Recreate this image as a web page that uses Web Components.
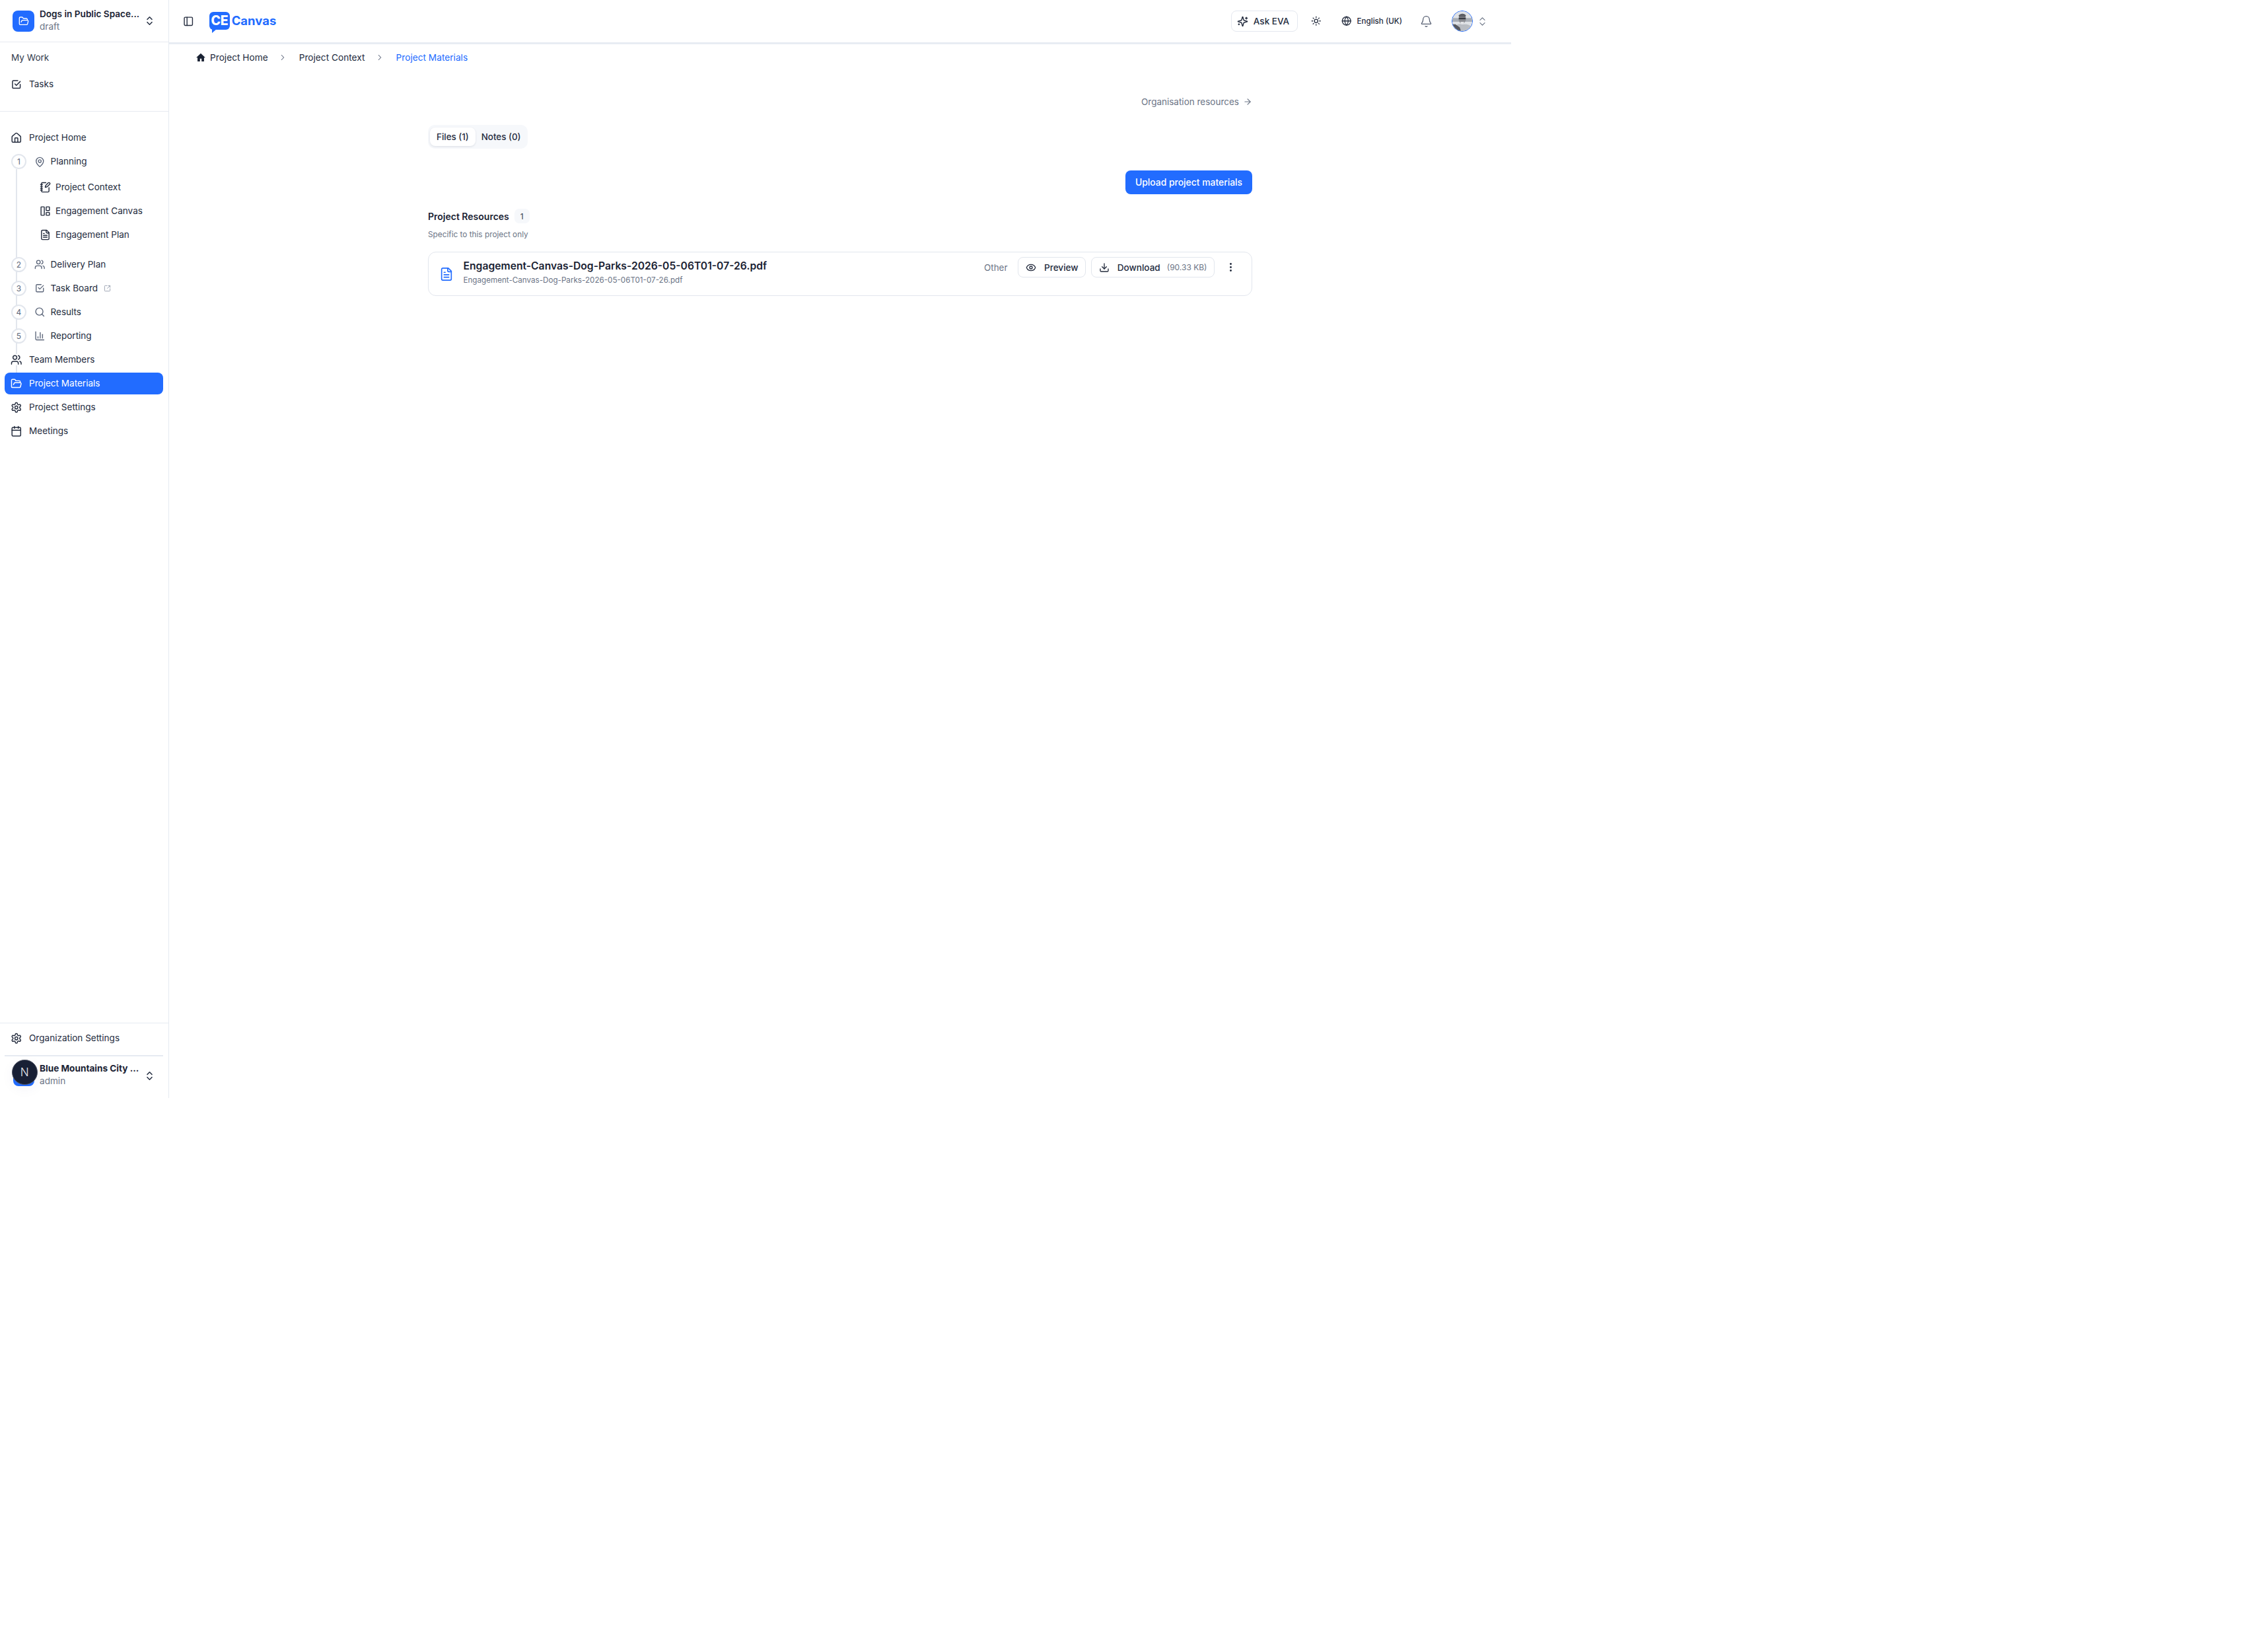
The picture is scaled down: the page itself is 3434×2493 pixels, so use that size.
<!DOCTYPE html>
<html lang="en"><head><meta charset="utf-8"><title>Project Materials</title>
<style>
html,body{margin:0;padding:0;background:#fff;font-family:Inter,"Liberation Sans",sans-serif;color:#1a2233}
</style></head><body>
<app-shell>
  <side-bar slot="side"></side-bar>
  <top-bar slot="top"></top-bar>
  <bread-crumbs slot="crumbs"></bread-crumbs>
  <materials-page slot="main"></materials-page>
</app-shell>
<script>
const P={
 folder:'<path d="m6 14 1.5-2.9A2 2 0 0 1 9.24 10H20a2 2 0 0 1 1.94 2.5l-1.54 6a2 2 0 0 1-1.95 1.5H4a2 2 0 0 1-2-2V5a2 2 0 0 1 2-2h3.9a2 2 0 0 1 1.69.9l.81 1.2a2 2 0 0 0 1.67.9H18a2 2 0 0 1 2 2v2"/>',
 updown:'<path d="m7 15 5 5 5-5"/><path d="m7 9 5-5 5 5"/>',
 check:'<path d="M9 11l3 3l8-8"/><path d="M20 12v6a2 2 0 0 1-2 2H6a2 2 0 0 1-2-2V6a2 2 0 0 1 2-2h9"/>',
 home:'<path d="M15 21v-8a1 1 0 0 0-1-1h-4a1 1 0 0 0-1 1v8"/><path d="M3 10a2 2 0 0 1 .709-1.528l7-5.999a2 2 0 0 1 2.582 0l7 5.999A2 2 0 0 1 21 10v9a2 2 0 0 1-2 2H5a2 2 0 0 1-2-2z"/>',
 pin:'<path d="M20 10c0 4.993-5.539 10.193-7.399 11.799a1 1 0 0 1-1.202 0C9.539 20.193 4 14.993 4 10a8 8 0 0 1 16 0"/><circle cx="12" cy="10" r="3"/>',
 note:'<path d="M13.4 2H6a2 2 0 0 0-2 2v16a2 2 0 0 0 2 2h12a2 2 0 0 0 2-2v-7.4"/><path d="M2 6h4"/><path d="M2 10h4"/><path d="M2 14h4"/><path d="M2 18h4"/><path d="M21.378 5.626a1 1 0 1 0-3.004-3.004l-5.01 5.012a2 2 0 0 0-.506.854l-.837 2.87a.5.5 0 0 0 .62.62l2.87-.837a2 2 0 0 0 .854-.506z"/>',
 board:'<rect x="3" y="3" width="7" height="18" rx="1"/><rect x="14" y="3" width="7" height="8" rx="1"/><rect x="14" y="15" width="7" height="6" rx="1"/>',
 file:'<path d="M15 2H6a2 2 0 0 0-2 2v16a2 2 0 0 0 2 2h12a2 2 0 0 0 2-2V7Z"/><path d="M14 2v4a2 2 0 0 0 2 2h4"/><path d="M10 9H8"/><path d="M16 13H8"/><path d="M16 17H8"/>',
 users:'<path d="M16 21v-2a4 4 0 0 0-4-4H6a4 4 0 0 0-4 4v2"/><circle cx="9" cy="7" r="4"/><path d="M22 21v-2a4 4 0 0 0-3-3.87"/><path d="M16 3.13a4 4 0 0 1 0 7.75"/>',
 ext:'<path d="M21 13v6a2 2 0 0 1-2 2H5a2 2 0 0 1-2-2V5a2 2 0 0 1 2-2h6"/><path d="m21 3-9 9"/><path d="M15 3h6v6"/>',
 search:'<circle cx="11" cy="11" r="8"/><path d="m21 21-4.3-4.3"/>',
 chart:'<path d="M3 3v16a2 2 0 0 0 2 2h16"/><path d="M18 17V9"/><path d="M13 17V5"/><path d="M8 17v-3"/>',
 gear:'<path d="M12.22 2h-.44a2 2 0 0 0-2 2v.18a2 2 0 0 1-1 1.73l-.43.25a2 2 0 0 1-2 0l-.15-.08a2 2 0 0 0-2.73.73l-.22.38a2 2 0 0 0 .73 2.73l.15.1a2 2 0 0 1 1 1.72v.51a2 2 0 0 1-1 1.74l-.15.09a2 2 0 0 0-.73 2.73l.22.38a2 2 0 0 0 2.73.73l.15-.08a2 2 0 0 1 2 0l.43.25a2 2 0 0 1 1 1.73V20a2 2 0 0 0 2 2h.44a2 2 0 0 0 2-2v-.18a2 2 0 0 1 1-1.73l.43-.25a2 2 0 0 1 2 0l.15.08a2 2 0 0 0 2.73-.73l.22-.39a2 2 0 0 0-.73-2.73l-.15-.08a2 2 0 0 1-1-1.74v-.5a2 2 0 0 1 1-1.74l.15-.09a2 2 0 0 0 .73-2.73l-.22-.38a2 2 0 0 0-2.73-.73l-.15.08a2 2 0 0 1-2 0l-.43-.25a2 2 0 0 1-1-1.73V4a2 2 0 0 0-2-2z"/><circle cx="12" cy="12" r="3"/>',
 cal:'<path d="M8 2v4"/><path d="M16 2v4"/><rect x="3" y="4" width="18" height="18" rx="2"/><path d="M3 10h18"/>',
 panel:'<rect x="3" y="3" width="18" height="18" rx="2"/><path d="M9 3v18"/>',
 spark:'<path d="M9.937 15.5A2 2 0 0 0 8.5 14.063l-6.135-1.582a.5.5 0 0 1 0-.962L8.5 9.936A2 2 0 0 0 9.937 8.5l1.582-6.135a.5.5 0 0 1 .963 0L14.063 8.5A2 2 0 0 0 15.5 9.937l6.135 1.581a.5.5 0 0 1 0 .964L15.5 14.063a2 2 0 0 0-1.437 1.437l-1.582 6.135a.5.5 0 0 1-.963 0z"/><path d="M20 3v4"/><path d="M22 5h-4"/><path d="M4 17v2"/><path d="M5 18H3"/>',
 sun:'<circle cx="12" cy="12" r="4"/><path d="M12 2v2"/><path d="M12 20v2"/><path d="m4.93 4.93 1.41 1.41"/><path d="m17.66 17.66 1.41 1.41"/><path d="M2 12h2"/><path d="M20 12h2"/><path d="m6.34 17.66-1.41 1.41"/><path d="m19.07 4.93-1.41 1.41"/>',
 globe:'<circle cx="12" cy="12" r="10"/><path d="M12 2a14.5 14.5 0 0 0 0 20 14.5 14.5 0 0 0 0-20"/><path d="M2 12h20"/>',
 bell:'<path d="M10.268 21a2 2 0 0 0 3.464 0"/><path d="M3.262 15.326A1 1 0 0 0 4 17h16a1 1 0 0 0 .74-1.673C19.41 13.956 18 12.499 18 8A6 6 0 0 0 6 8c0 4.499-1.411 5.956-2.738 7.326"/>',
 arrow:'<path d="M5 12h14"/><path d="m12 5 7 7-7 7"/>',
 eye:'<path d="M2.062 12.348a1 1 0 0 1 0-.696 10.75 10.75 0 0 1 19.876 0 1 1 0 0 1 0 .696 10.75 10.75 0 0 1-19.876 0"/><circle cx="12" cy="12" r="3"/>',
 down:'<path d="M21 15v4a2 2 0 0 1-2 2H5a2 2 0 0 1-2-2v-4"/><path d="m7 10 5 5 5-5"/><path d="M12 15V3"/>',
 dots:'<circle cx="12" cy="5" r="2.1" fill="currentColor" stroke="none"/><circle cx="12" cy="12" r="2.1" fill="currentColor" stroke="none"/><circle cx="12" cy="19" r="2.1" fill="currentColor" stroke="none"/>',
 chev:'<path d="m9 18 6-6-6-6"/>',
 house:'<path d="M12 2.6 1.6 12.2h3V21h5.6v-6.2h3.6V21h5.6v-8.8h3z" fill="currentColor" stroke="none"/>'
};
function def(name,css,html){
  customElements.define(name,class extends HTMLElement{
    constructor(){super();this.attachShadow({mode:'open'}).innerHTML='<style>'+css+'</style>'+html;}
  });
}
customElements.define('x-icon',class extends HTMLElement{
  connectedCallback(){
    if(this.shadowRoot) return;
    const s=this.getAttribute('size')||16,w=this.getAttribute('sw')||2;
    this.attachShadow({mode:'open'}).innerHTML=`<style>:host{display:inline-flex;flex:none;width:${s}px;height:${s}px}svg{display:block;width:100%;height:100%}</style><svg viewBox="0 0 24 24" fill="none" stroke="currentColor" stroke-width="${w}" stroke-linecap="round" stroke-linejoin="round">${P[this.getAttribute('name')]||''}</svg>`;
  }
});
/* element whose markup depends on its attributes */
function defA(name,css,fn){
  customElements.define(name,class extends HTMLElement{
    connectedCallback(){
      if(this.shadowRoot) return;
      this.attachShadow({mode:'open'}).innerHTML='<style>'+css+'</style>'+fn(this);
    }
  });
}

def('app-shell',`
:host{display:grid;width:2288px;height:1662px;grid-template-columns:256px 1fr;grid-template-rows:67px 40px 1fr;box-sizing:border-box}
.s{grid-row:1/4;grid-column:1;display:flex;min-height:0}
.t{grid-row:1;grid-column:2}.c{grid-row:2;grid-column:2}.m{grid-row:3;grid-column:2}
`,`<div class="s"><slot name="side"></slot></div><div class="t"><slot name="top"></slot></div><div class="c"><slot name="crumbs"></slot></div><div class="m"><slot name="main"></slot></div>`);

defA('nav-item',`
:host{display:flex;align-items:center;height:33px;margin-bottom:3px;padding-left:8.75px;border-radius:8px;font-size:13.55px;color:#232b3d;position:relative;box-sizing:border-box}
:host([active]){background:#226cff;color:#fff}
:host([sub]){padding-left:52.5px}
:host([step]){padding-left:10px}
.ic{display:inline-flex;background:var(--ibg,transparent);position:relative;top:.5px}
.lab{margin-left:10.75px;white-space:nowrap;position:relative;top:-.5px}
:host([sub]) .lab{margin-left:7.5px}
:host([step]) .lab{margin-left:7.75px}
.num{display:none;flex:none;width:23px;height:23px;border-radius:50%;border:2px solid #e2e6ed;background:#fff;box-sizing:border-box;align-items:center;justify-content:center;font-size:12px;color:#5c667a;margin-right:12.25px}
:host([step]) .num{display:flex}
:host([step]) .ic{color:#5c667a}
.extra{margin-left:9px;color:#8b94a5;display:inline-flex}
`,el=>{
  const step=el.hasAttribute('step'),sub=el.hasAttribute('sub');
  const size=step?16.5:sub?17:17.5;
  return `<span class="num">${el.getAttribute('step')||''}</span><span class="ic"><x-icon name="${el.getAttribute('icon')}" size="${size}" sw="2"></x-icon></span><span class="lab"><slot></slot></span>${el.hasAttribute('ext')?'<span class="extra"><x-icon name="ext" size="11" sw="1.8"></x-icon></span>':''}`;
});

defA('switch-row',`
:host{display:flex;align-items:center;box-sizing:border-box;position:relative}
.logo{flex:none;width:33px;height:32px;margin-left:19px;border-radius:8px;background:#226cff;color:#fff;display:flex;align-items:center;justify-content:center}
:host(.org) .logo{background:none}
.txt{margin-left:8px;width:158px;line-height:1;display:flex;flex-direction:column;position:relative;top:-.5px}
:host(.org) .txt{top:-1.5px}
.t{font-size:13.6px;font-weight:600;color:#1a2233;white-space:nowrap}
:host(.org) .t{font-weight:700;font-size:13.6px}
.u{font-size:13.6px;color:#6b7485;margin-top:5.5px;white-space:nowrap}
.c{margin-left:-.5px;color:#2a3346;display:inline-flex}
`,el=>`<div class="logo"><slot name="logo"><x-icon name="folder" size="16" sw="2"></x-icon></slot></div><div class="txt"><div class="t">${el.getAttribute('title')}</div><div class="u">${el.getAttribute('sub')}</div></div><span class="c"><x-icon name="updown" size="17" sw="2"></x-icon></span>`);

def('org-logo',`
:host{display:block;width:33px;height:32px;position:relative}
.b{position:absolute;left:1px;top:-1px;width:32px;height:32px;border-radius:8px;background:#226cff}
.n{position:absolute;left:-1px;top:-9px;width:38.5px;height:38.5px;border-radius:50%;background:#182035;border:1.5px solid #4d5262;box-sizing:border-box;display:flex;align-items:center;justify-content:center;color:#e8e9ee;font-size:17px;font-weight:300;box-shadow:0 6px 20px rgba(40,60,110,.05)}
`,`<div class="b"></div><div class="n">N</div>`);

def('side-bar',`
:host{display:flex;flex-direction:column;width:256px;height:1662px;border-right:1.5px solid #e6eaf1;box-sizing:border-box}
.head{height:64px;border-bottom:1.5px solid #e6eaf1;box-sizing:border-box;display:flex;align-items:center;flex:none}
.work{height:105px;border-bottom:1.5px solid #e6eaf1;box-sizing:border-box;flex:none;padding:13px 8.5px 0 7px}
.label{height:20px;line-height:20px;font-size:13.55px;padding-left:10px;color:#343c4e;margin-bottom:13.5px}
nav{flex:1;padding:23px 8.5px 0 7px;position:relative;min-height:0}
nav:before{content:"";position:absolute;left:23.5px;top:87px;height:308px;width:2px;background:#e2e6ed}
.group{padding:2.5px 0 9px}
.bottom{flex:none;border-top:1.5px solid #e6eaf1;padding:6px 8.5px 0 7px;box-sizing:border-box;height:114px}
.bottom nav-item{margin-bottom:0}
.rule{height:1.5px;background:#e6eaf1;margin-top:9px}
.bottom switch-row{margin-left:-7px;width:256px;height:60px}
.head switch-row{width:100%}
`,`<div class="head"><switch-row title="Dogs in Public Space..." sub="draft"></switch-row></div>
<div class="work"><div class="label">My Work</div><nav-item icon="check">Tasks</nav-item></div>
<nav>
<nav-item icon="home">Project Home</nav-item>
<nav-item icon="pin" step="1">Planning</nav-item>
<div class="group">
<nav-item icon="note" sub>Project Context</nav-item>
<nav-item icon="board" sub>Engagement Canvas</nav-item>
<nav-item icon="file" sub>Engagement Plan</nav-item>
</div>
<nav-item icon="users" step="2">Delivery Plan</nav-item>
<nav-item icon="check" step="3" ext>Task Board</nav-item>
<nav-item icon="search" step="4">Results</nav-item>
<nav-item icon="chart" step="5">Reporting</nav-item>
<nav-item icon="users" style="--ibg:#fff">Team Members</nav-item>
<nav-item icon="folder" active>Project Materials</nav-item>
<nav-item icon="gear">Project Settings</nav-item>
<nav-item icon="cal">Meetings</nav-item>
</nav>
<div class="bottom"><nav-item icon="gear">Organization Settings</nav-item><div class="rule"></div>
<switch-row class="org" title="Blue Mountains City ..." sub="admin"><org-logo slot="logo"></org-logo></switch-row></div>`);

def('ask-button',`
:host{display:inline-flex;align-items:center;height:32px;width:101px;border:1.5px solid #e4e8ef;border-radius:8px;box-sizing:border-box;padding-left:8px;font-size:13.5px;font-weight:500;color:#232b3d;gap:8px;white-space:nowrap}
`,`<x-icon name="spark" size="17" sw="2"></x-icon><slot></slot>`);

def('user-photo',`
:host{display:block;flex:none;width:32px;height:32px;border-radius:50%;border:1.5px solid #226cff;box-sizing:border-box;overflow:hidden;background:#c9ced6}
svg{display:block;width:100%;height:100%}
`,`<svg viewBox="0 0 32 32"><rect width="32" height="32" fill="#dfe2e6"/><rect y="11" width="32" height="6" fill="#a9aeb6"/><path d="M6 32V23c3-3 7-3 10-2l7 0c4 1 8 3 9 5v6z" fill="#b9bdc3"/><path d="M0 32V21l5 0 7 5 2 6z" fill="#55585f"/><ellipse cx="16" cy="12" rx="6" ry="8" fill="#8b8d92"/><rect x="10.5" y="10.5" width="11" height="2.5" fill="#3a3d44"/><path d="M10 7c3-4 10-4 12 0l-1 2H11z" fill="#5c5e65"/><path d="M13 17h6l-1 4h-4z" fill="#e2e3e6"/></svg>`);

def('top-bar',`
:host{display:flex;align-items:center;height:67px;box-sizing:border-box;border-bottom:3px solid #e8ecf3;padding:0 0 0 20.75px;color:#232b3d}
.logo{display:flex;align-items:center;margin-left:23.75px;color:#226cff}
.ce{position:relative;width:31px;height:27px;border-radius:6px;background:#226cff;color:#fff;font-weight:800;font-size:19.5px;line-height:27px;text-align:center;letter-spacing:-.3px;margin-top:-2px}
.ce:after{content:"";position:absolute;left:4px;bottom:-5px;border-right:7px solid transparent;border-top:6px solid #226cff}
.name{font-weight:700;font-size:18.5px;margin-left:2.7px;margin-top:-3px}
.sp{flex:1}
.sun{margin-left:20px;display:inline-flex}
.lang{display:inline-flex;align-items:center;font-size:11.6px;font-weight:500;margin-left:30.75px;gap:8px;white-space:nowrap}
.bell{margin-left:27px;color:#545d70;display:inline-flex}
user-photo{margin-left:28.5px}
.ud{margin-left:6px;margin-right:35.5px;color:#6b7485;display:inline-flex}
`,`<x-icon name="panel" size="16.5" sw="2"></x-icon>
<div class="logo"><span class="ce">CE</span><span class="name">Canvas</span></div>
<div class="sp"></div>
<ask-button>Ask EVA</ask-button>
<span class="sun"><x-icon name="sun" size="15.5" sw="2"></x-icon></span>
<span class="lang"><x-icon name="globe" size="15.5" sw="2"></x-icon>English (UK)</span>
<span class="bell"><x-icon name="bell" size="19" sw="1.6"></x-icon></span>
<user-photo></user-photo>
<span class="ud"><x-icon name="updown" size="17" sw="1.6"></x-icon></span>`);

def('bread-crumbs',`
:host{display:flex;align-items:center;height:40px;padding:0 0 0 40px;font-size:13.7px;color:#232b3d;box-sizing:border-box}
.h{color:#1a2233;display:inline-flex;margin-right:6px}
.c{display:inline-flex;color:#5c667a;margin:0 18px 0 15px}
.cur{color:#226cff}
span{white-space:nowrap}
`,`<span class="h"><x-icon name="house" size="16"></x-icon></span><span>Project Home</span><span class="c"><x-icon name="chev" size="14" sw="1.8"></x-icon></span><span>Project Context</span><span class="c"><x-icon name="chev" size="14" sw="1.8"></x-icon></span><span class="cur">Project Materials</span>`);

def('tab-bar',`
:host{display:inline-flex;align-items:center;height:36px;width:151px;background:#f6f8fb;border-radius:10px;padding:0 3px;font-size:13.4px;font-weight:500;color:#232b3d;box-sizing:border-box}
.t{height:28px;line-height:28px;padding:0 10px;border-radius:8px;white-space:nowrap}
.a{background:#fff;box-shadow:0 1px 3px rgba(30,40,70,.12);margin-right:-1px;position:relative}
`,`<span class="t a">Files (1)</span><span class="t">Notes (0)</span>`);

defA('line-button',`
:host{display:inline-flex;align-items:center;height:31px;border:1.5px solid #e2e6ed;border-radius:8px;box-sizing:border-box;padding:0 10.5px;font-size:13.6px;font-weight:500;color:#232b3d;gap:12px;white-space:nowrap;background:#fff}
`,el=>`<x-icon name="${el.getAttribute('icon')}" size="16" sw="2"></x-icon><slot></slot>`);

def('file-card',`
:host{display:flex;align-items:flex-start;height:66.5px;border:1.5px solid #e2e6ed;border-radius:12px;box-sizing:border-box;padding-left:15.5px}
.ic{color:#226cff;display:inline-flex;margin-top:21.5px}
.txt{margin-left:15px;flex:1;min-width:0;margin-top:9.5px}
.t{font-size:15.7px;font-weight:600;color:#1a2233;line-height:22px;white-space:nowrap}
.s{font-size:11.65px;color:#6b7485;line-height:16px;white-space:nowrap;margin-top:2px}
.r{display:flex;align-items:center;margin-top:7px;gap:8px}
.o{font-size:13.4px;color:#6b7485;margin-right:8px}
.kb{font-size:12px;color:#6b7485;font-weight:400;margin-left:-2px}
.d{display:inline-flex;color:#232b3d;margin:0 23px 0 8px}
`,`<span class="ic"><x-icon name="file" size="22" sw="1.8"></x-icon></span>
<div class="txt"><div class="t">Engagement-Canvas-Dog-Parks-2026-05-06T01-07-26.pdf</div><div class="s">Engagement-Canvas-Dog-Parks-2026-05-06T01-07-26.pdf</div></div>
<div class="r"><span class="o">Other</span><line-button icon="eye">Preview</line-button><line-button icon="down">Download<span class="kb">(90.33 KB)</span></line-button><span class="d"><x-icon name="dots" size="17"></x-icon></span></div>`);

def('materials-page',`
:host{display:block;width:1248px;margin:0 auto;box-sizing:border-box}
.org{display:flex;justify-content:flex-end;align-items:center;height:20px;padding-top:37px;font-size:13.5px;color:#6b7485;gap:6px}
.tabs{margin-top:25px;display:flex}
.up{display:flex;justify-content:flex-end;margin-top:33px}
.btn{height:36px;width:192px;background:#226cff;color:#fff;border-radius:8px;font-size:13.9px;font-weight:500;display:flex;align-items:center;justify-content:center;white-space:nowrap;padding-bottom:1px;box-sizing:border-box}
.h{display:flex;align-items:center;margin-top:22px;height:22px}
.h b{font-size:14px;font-weight:600;color:#1a2233}
.n{margin-left:8px;width:23px;height:22px;border-radius:7px;background:#f6f8fb;font-size:12px;display:flex;align-items:center;justify-content:center;color:#343c4e}
.sub{font-size:11.8px;color:#6b7485;line-height:16px;margin-top:9px;margin-bottom:18px}
`,`<div class="org">Organisation resources <x-icon name="arrow" size="14" sw="2"></x-icon></div>
<div class="tabs"><tab-bar></tab-bar></div>
<div class="up"><div class="btn">Upload project materials</div></div>
<div class="h"><b>Project Resources</b><span class="n">1</span></div>
<div class="sub">Specific to this project only</div>
<file-card></file-card>`);
</script>
</body></html>
